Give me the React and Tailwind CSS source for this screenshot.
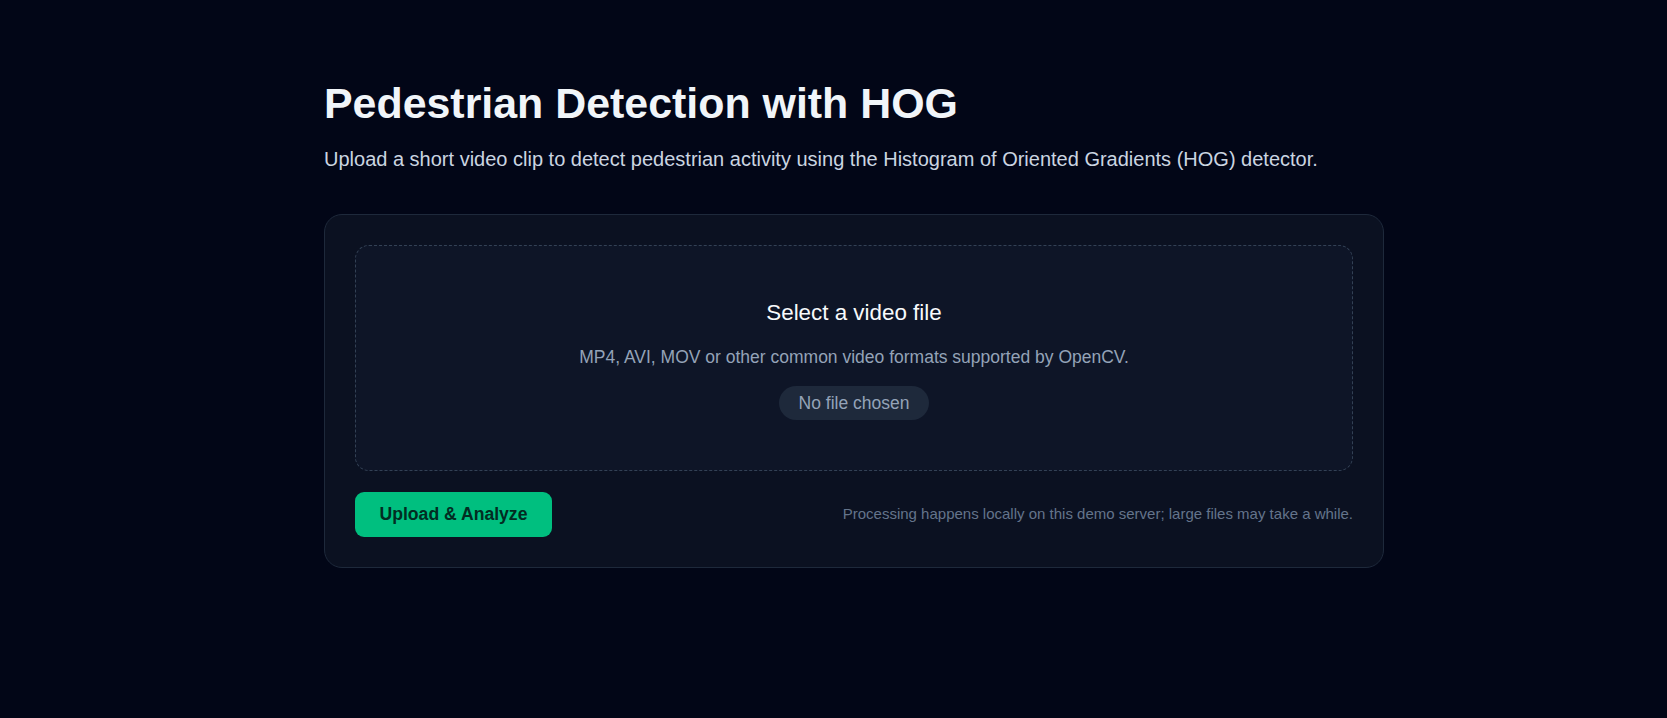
export default function App() {
  return (
    <div
      className="min-h-screen bg-[#020617] text-slate-100"
      style={{ fontFamily: '"Liberation Sans", Arial, sans-serif' }}
    >
      <div className="flex justify-center pl-[41px] pt-[77px]">
        <main className="w-[1060px]">
          <h1 className="text-[42.9px] font-bold leading-[52px] text-[#f1f5f9]">
            Pedestrian Detection with HOG
          </h1>
          <p className="mt-[15px] text-[20px] leading-[30px] text-[#cbd5e1]">
            Upload a short video clip to detect pedestrian activity using the Histogram of Oriented Gradients (HOG) detector.
          </p>

          <section className="mt-[40px] rounded-[18px] border border-[#1e293b] bg-[#0b1121] p-[30px]">
            <label className="flex flex-col items-center rounded-[14px] border border-dashed border-[#334155] bg-[#0e1527] pt-[53px] pb-[50px]">
              <h2 className="text-[22.4px] leading-[27px] text-[#f8fafc]">Select a video file</h2>
              <p className="mt-[18px] text-[17.5px] leading-[26px] text-[#94a3b8]">
                MP4, AVI, MOV or other common video formats supported by OpenCV.
              </p>
              <span className="mt-[16px] rounded-full bg-[#1e293b] px-[20px] py-[6px] text-[17.5px] leading-[22px] text-[#94a3b8]">
                No file chosen
              </span>
            </label>

            <div className="mt-[21px] flex items-center justify-between">
              <button className="h-[45px] w-[197px] rounded-[9px] bg-[#00bf7f] text-[17.6px] font-bold text-[#022c22]">
                Upload &amp; Analyze
              </button>
              <p className="text-[15px] text-[#64748b]">
                Processing happens locally on this demo server; large files may take a while.
              </p>
            </div>
          </section>
        </main>
      </div>
    </div>
  );
}
